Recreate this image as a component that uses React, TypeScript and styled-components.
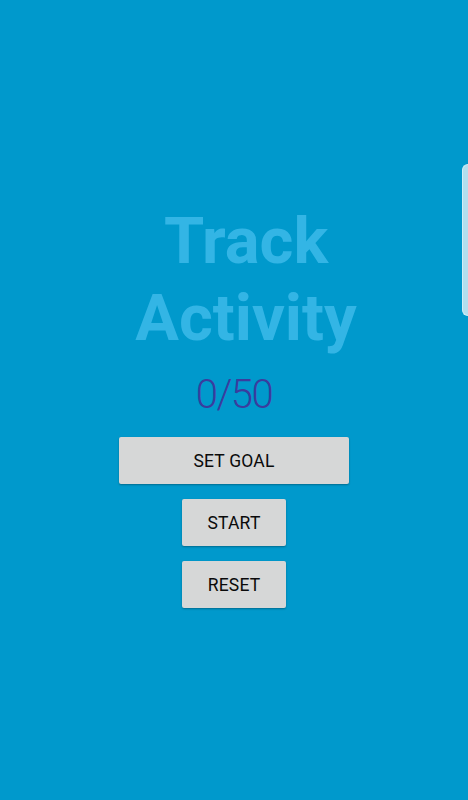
import styled, { createGlobalStyle } from 'styled-components';

const GlobalStyle = createGlobalStyle`
  html, body {
    margin: 0;
    padding: 0;
    background-color: #0099cc;
  }
  body {
    font-family: Roboto, "Liberation Sans", sans-serif;
  }
`;

function App() {
  return (
    <StScreen>
      <GlobalStyle />
      <StTitle>
        Track
        <br />
        Activity
      </StTitle>
      <StCounter>0/50</StCounter>
      <StButton $wide>SET GOAL</StButton>
      <StButton>START</StButton>
      <StButton>RESET</StButton>
      <StEdgeHandle />
    </StScreen>
  );
}

export default App;

const StScreen = styled.div`
  position: relative;
  display: flex;
  flex-direction: column;
  align-items: center;
  width: 468px;
  height: 800px;
  padding-top: 203px;
  box-sizing: border-box;
  overflow: hidden;
  background-color: #0099cc;
`;

const StTitle = styled.h1`
  margin: 0;
  padding-left: 24px;
  color: #33b5e5;
  font-family: Roboto, "Liberation Sans", sans-serif;
  font-weight: 700;
  font-size: 65px;
  line-height: 77px;
  text-align: center;
`;

const StCounter = styled.p`
  margin: 14px 0 19px;
  color: #3a3c9e;
  font-family: Roboto, "Liberation Sans", sans-serif;
  font-weight: 300;
  font-size: 40px;
  line-height: 47px;
  letter-spacing: -1.5px;
`;

const StButton = styled.button<{ $wide?: boolean }>`
  width: ${({ $wide }) => ($wide ? '230px' : '104px')};
  height: 47px;
  margin-bottom: 15px;
  padding: 0;
  border: none;
  border-radius: 2px;
  background-color: #d6d7d7;
  box-shadow: 0 1px 2px rgba(0, 0, 0, 0.3);
  color: #0a0a0a;
  font-family: Roboto, "Liberation Sans", sans-serif;
  font-weight: 400;
  font-size: 17.5px;
  letter-spacing: 0.2px;
`;

const StEdgeHandle = styled.div`
  position: absolute;
  top: 164px;
  right: 0;
  width: 6px;
  height: 152px;
  border: 1px solid #d3eef7;
  border-right: none;
  border-radius: 6px 0 0 6px;
  background-color: #b3dfee;
  box-sizing: border-box;
`;
